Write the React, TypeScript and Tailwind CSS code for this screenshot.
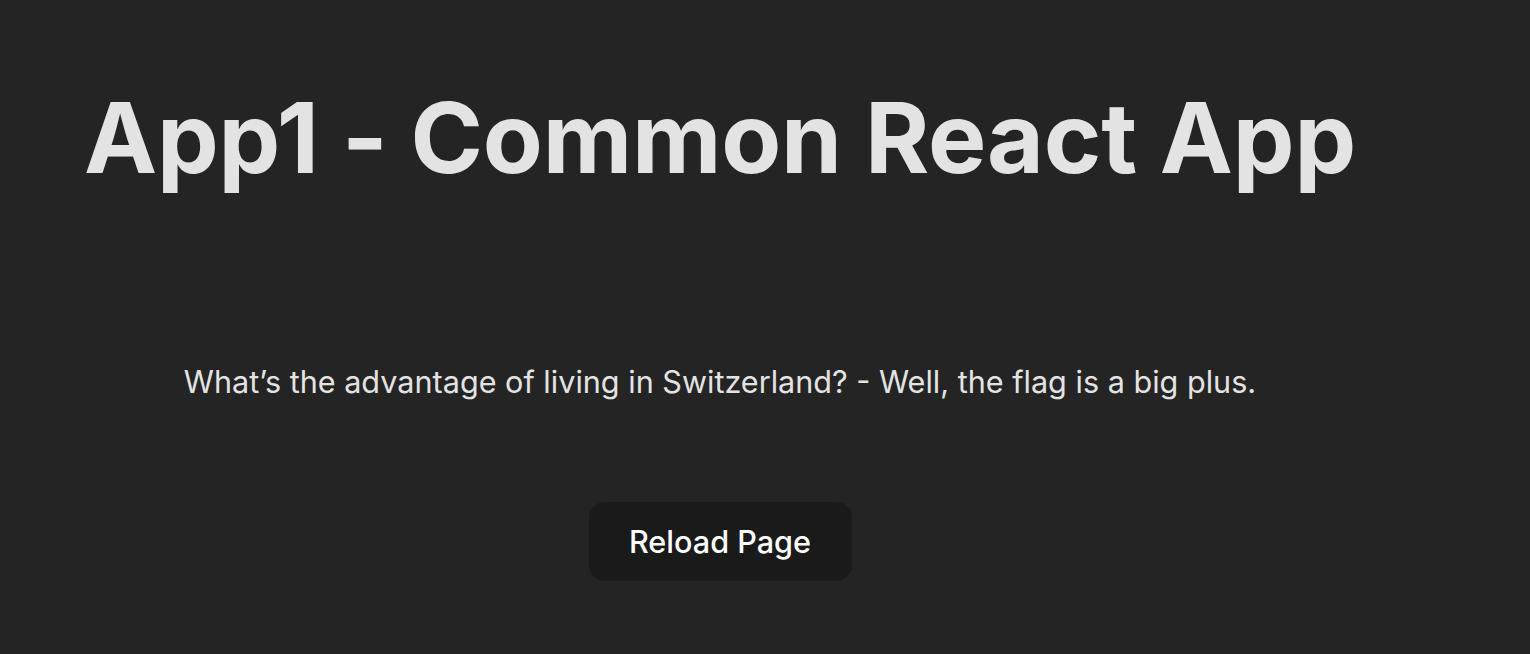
export default function App() {
  return (
    <div className="min-h-screen bg-[#242424] text-[#e3e3e3] [font-family:Inter,'Liberation_Sans',sans-serif]">
      <div className="flex w-[1440px] flex-col items-center pt-[84px] text-center">
        <h1 className="whitespace-nowrap text-[98px] font-bold leading-[108px] tracking-[-0.2px]">App1 - Common React App</h1>
        <p className="mt-[167px] whitespace-nowrap text-[30.6px] leading-[46px]">
          What’s the advantage of living in Switzerland? - Well, the flag is a big plus.
        </p>
        <button className="mt-[97px] h-[79px] w-[263px] rounded-2xl bg-[#1a1a1a] text-[30.6px] font-medium leading-[46px] text-white">
          Reload Page
        </button>
      </div>
    </div>
  );
}
